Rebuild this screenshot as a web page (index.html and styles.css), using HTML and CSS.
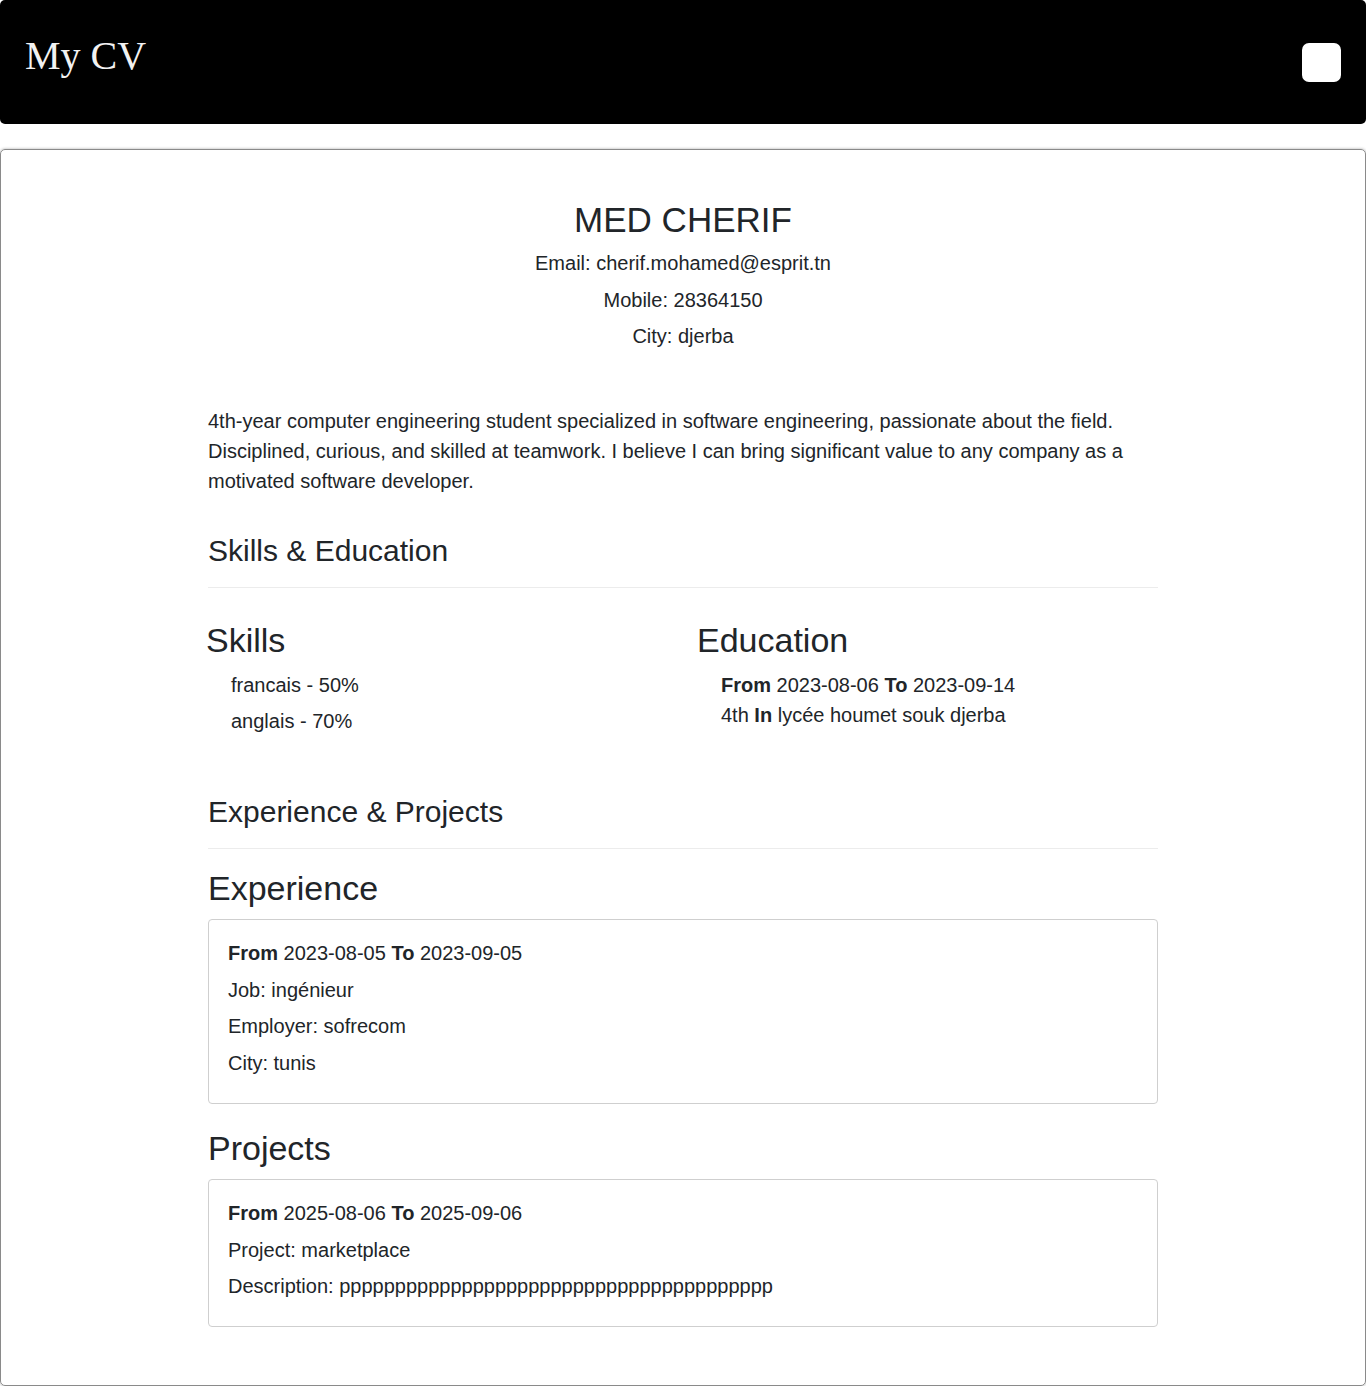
FILE: index.html
```html
<!DOCTYPE html>
<html lang="en">
<head>
<meta charset="utf-8">
<title>My CV</title>
<link rel="stylesheet" href="styles.css">
</head>
<body>
<header class="topbar">
  <div class="brand">My CV</div>
  <button class="menu-btn" aria-label="menu"></button>
</header>

<main class="cv-card">
  <div class="container">
    <h3 class="name">MED CHERIF</h3>
    <div class="contact">
      <p>Email: cherif.mohamed@esprit.tn</p>
      <p>Mobile: 28364150</p>
      <p>City: djerba</p>
    </div>

    <p class="summary">4th-year computer engineering student specialized in software engineering, passionate about the field. Disciplined, curious, and skilled at teamwork. I believe I can bring significant value to any company as a motivated software developer.</p>

    <h4 class="section-title">Skills &amp; Education</h4>
    <hr class="divider">

    <div class="two-cols">
      <div class="col">
        <h3 class="col-title">Skills</h3>
        <ul class="skills">
          <li>francais - 50%</li>
          <li>anglais - 70%</li>
        </ul>
      </div>
      <div class="col">
        <h3 class="col-title">Education</h3>
        <div class="education">
          <div><b>From</b> 2023-08-06 <b>To</b> 2023-09-14</div>
          <div>4th <b>In</b> lycée houmet souk djerba</div>
        </div>
      </div>
    </div>

    <h4 class="section-title">Experience &amp; Projects</h4>
    <hr class="divider">

    <h3 class="sub-title first">Experience</h3>
    <div class="entry">
      <p><b>From</b> 2023-08-05 <b>To</b> 2023-09-05</p>
      <p>Job: ingénieur</p>
      <p>Employer: sofrecom</p>
      <p>City: tunis</p>
    </div>

    <h3 class="sub-title">Projects</h3>
    <div class="entry">
      <p><b>From</b> 2025-08-06 <b>To</b> 2025-09-06</p>
      <p>Project: marketplace</p>
      <p>Description: ppppppppppppppppppppppppppppppppppppppp</p>
    </div>
  </div>
</main>
</body>
</html>
```

FILE: styles.css
```css
* { box-sizing: border-box; }

body {
  margin: 0;
  font-family: "Liberation Sans", Arial, sans-serif;
  font-size: 20px;
  line-height: 30px;
  color: #212529;
  background: #fff;
}

.topbar {
  height: 124px;
  background: #000;
  border-radius: 5px;
  display: flex;
  align-items: center;
  justify-content: space-between;
  padding: 0 25px;
  margin-bottom: 25px;
}

.brand {
  font-family: "Liberation Serif", "Times New Roman", serif;
  font-size: 40px;
  line-height: 40px;
  color: #f2f2f2;
  margin-bottom: 13px;
}

.menu-btn {
  width: 39px;
  height: 39px;
  border: none;
  padding: 0;
  background: #fff;
  border-radius: 7px;
}

.cv-card {
  border: 1px solid #8a8a8a;
  border-radius: 5px;
  box-shadow: 0 0 3px rgba(0, 0, 0, 0.35);
  padding: 49px 0 58px;
}

.container {
  width: 950px;
  margin: 0 auto;
}

.name {
  font-size: 35px;
  line-height: 42px;
  font-weight: 400;
  text-align: center;
  margin: 0 0 7px;
}

.contact p {
  text-align: center;
  margin: 0 0 6.5px;
}

.summary {
  margin: 54.5px 0 0;
}

.section-title {
  font-size: 30px;
  line-height: 36px;
  font-weight: 400;
  margin: 37.6px 0 18px;
}

.divider {
  border: 0;
  border-top: 1px solid #ececec;
  margin: 0;
}

.two-cols {
  display: grid;
  grid-template-columns: 491px 491px;
  margin: 32.4px 0 51.6px -2px;
}

.col-title {
  font-size: 34px;
  line-height: 40.8px;
  font-weight: 400;
  margin: 0 0 9px;
}

.skills {
  list-style: none;
  margin: 0;
  padding: 0 0 0 25px;
}

.skills li {
  margin-bottom: 6px;
}

.education {
  padding-left: 24px;
}

.sub-title {
  font-size: 34px;
  line-height: 40.8px;
  font-weight: 400;
  margin: 24.4px 0 10px;
}

.sub-title.first {
  margin-top: 19.4px;
}

.entry {
  border: 1px solid #cfcfcf;
  border-radius: 4px;
  padding: 18.4px 19px;
}

.entry p {
  margin: 0 0 6.5px;
}
```
